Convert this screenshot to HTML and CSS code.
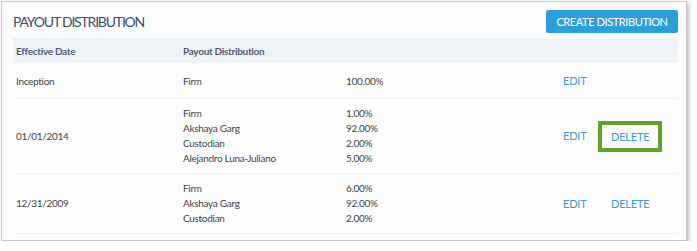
FILE: index.html
```html
<!DOCTYPE html>
<html lang="en">
<head>
    <meta charset="UTF-8">
    <title>Payout Distribution</title>
    <link rel="stylesheet" href="styles.css">
</head>
<body>
    <div class="panel">
        <div class="panel-head">
            <h2>PAYOUT DISTRIBUTION</h2>
            <button class="btn">CREATE DISTRIBUTION</button>
        </div>
        <table class="dist">
            <thead>
                <tr>
                    <th class="c-date">Effective Date</th>
                    <th class="c-name">Payout Distribution</th>
                    <th class="c-pct"></th>
                    <th class="c-edit"></th>
                    <th></th>
                </tr>
            </thead>
            <tbody>
                <tr class="r-single">
                    <td>Inception</td>
                    <td>Firm</td>
                    <td>100.00%</td>
                    <td><a href="#">EDIT</a></td>
                    <td></td>
                </tr>
                <tr>
                    <td>01/01/2014</td>
                    <td>Firm<br>Akshaya Garg<br>Custodian<br>Alejandro Luna-Juliano</td>
                    <td>1.00%<br>92.00%<br>2.00%<br>5.00%</td>
                    <td><a href="#">EDIT</a></td>
                    <td><a href="#" class="marked">DELETE</a></td>
                </tr>
                <tr>
                    <td>12/31/2009</td>
                    <td>Firm<br>Akshaya Garg<br>Custodian</td>
                    <td>6.00%<br>92.00%<br>2.00%</td>
                    <td><a href="#">EDIT</a></td>
                    <td><a href="#">DELETE</a></td>
                </tr>
            </tbody>
        </table>
    </div>
</body>
</html>
```

FILE: styles.css
```css
body {
    margin: 0;
    background: #fff;
    font-family: Lato, "Open Sans", sans-serif;
}
.panel {
    margin: 1px 0 0 1px;
    width: 665px;
    height: 230px;
    padding: 8px 8px 0 11px;
    border: 1px solid #c6c6c6;
    background: #fcfcfc;
    box-shadow: 2px 2px 4px rgba(0,0,0,0.25);
}
.panel-head {
    display: flex;
    justify-content: space-between;
    align-items: center;
    height: 23px;
    margin-bottom: 5px;
}
.panel-head h2 {
    margin: 0;
    font-size: 14px;
    font-weight: 400;
    color: #3e5068;
    letter-spacing: -1.2px;
}
.btn {
    height: 23px;
    width: 132px;
    padding: 0;
    border: none;
    border-radius: 2px;
    background: #2d9fd8;
    color: #fff;
    font-family: inherit;
    font-size: 11px;
    letter-spacing: -0.4px;
}
.dist {
    width: 100%;
    border-collapse: collapse;
    font-size: 10px;
    letter-spacing: -0.3px;
    color: #444;
}
.dist th {
    height: 25px;
    padding: 0 0 0 3px;
    background: #eff3f6;
    text-align: left;
    font-weight: 700;
    color: #535c75;
}
.dist td {
    padding: 7px 0 7px 3px;
    line-height: 15px;
    vertical-align: middle;
    border-bottom: 1px solid #eef0f2;
}
.dist .r-single td {
    padding: 10px 0 9px 3px;
}
.c-date { width: 164px; }
.c-name { width: 160px; }
.c-pct { width: 214px; }
.c-edit { width: 45px; }
.dist a {
    color: #3a9bd5;
    text-decoration: none;
    font-size: 11px;
    letter-spacing: -0.2px;
}
.dist a.marked {
    display: inline-block;
    padding: 4px 9px;
    margin: 0 0 0 -13px;
    border: 4px solid #5fa22a;
}
```
